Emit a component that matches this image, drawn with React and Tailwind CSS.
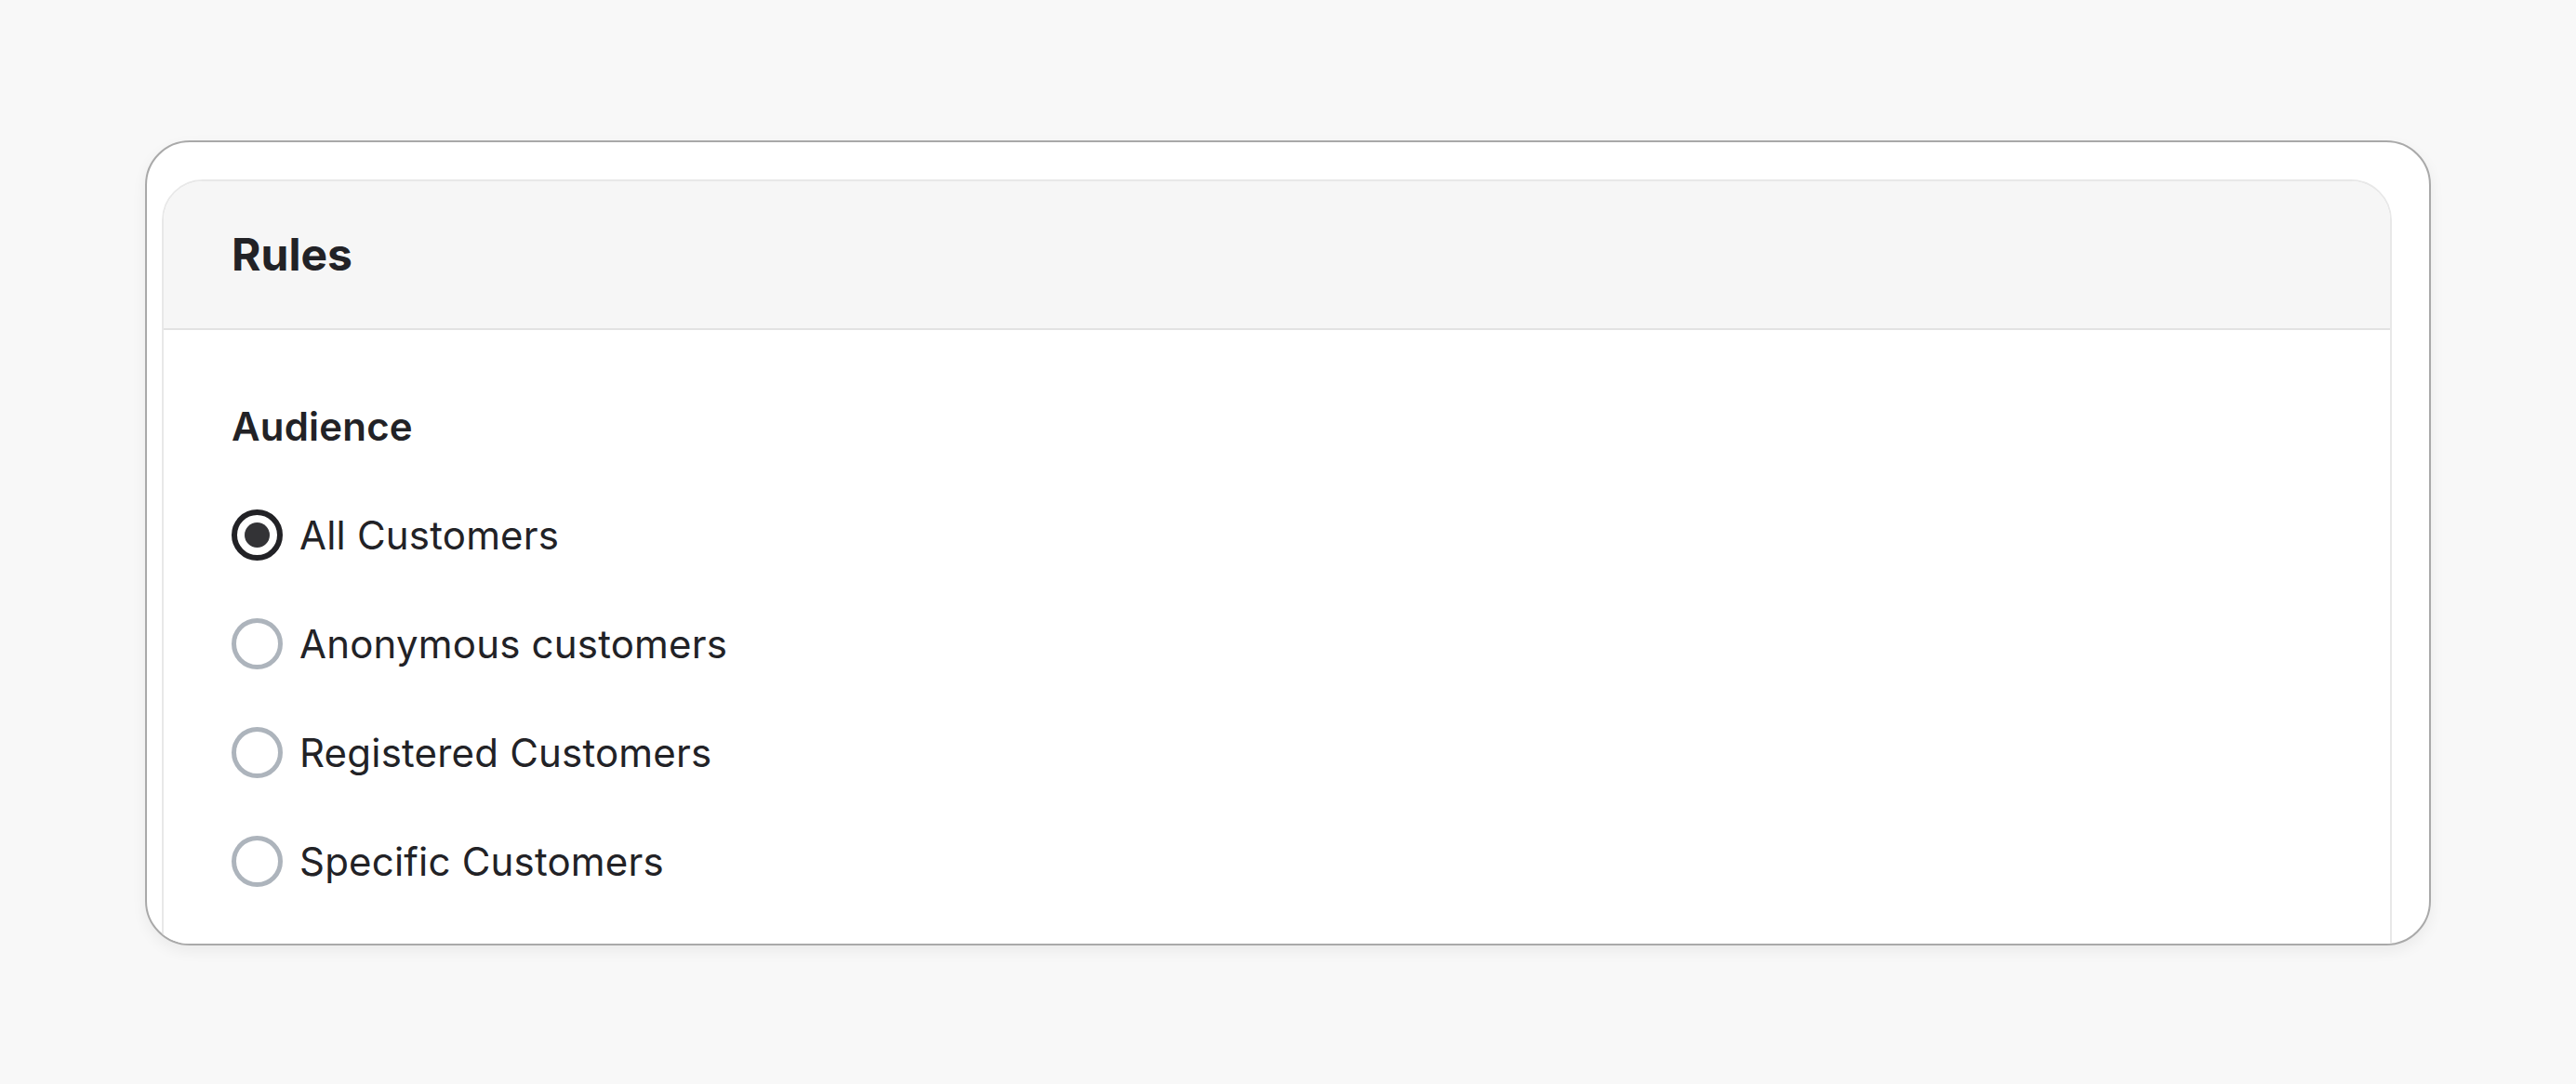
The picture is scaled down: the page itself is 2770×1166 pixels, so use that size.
import React, { useState } from 'react';

const options = [
  { id: 'all', label: 'All Customers' },
  { id: 'anonymous', label: 'Anonymous customers' },
  { id: 'registered', label: 'Registered Customers' },
  { id: 'specific', label: 'Specific Customers' },
];

const Radio = ({ checked }) => {
  if (checked) {
    return (
      <span className="flex h-[55px] w-[55px] shrink-0 items-center justify-center rounded-full border-[6px] border-[#222226]">
        <span className="h-[27px] w-[27px] rounded-full bg-[#333336]"></span>
      </span>
    );
  }
  return <span className="h-[55px] w-[55px] shrink-0 rounded-full border-[5px] border-[#adb4bc]"></span>;
};

const App = () => {
  const [audience, setAudience] = useState('all');

  return (
    <div
      className="min-h-screen bg-[#f8f8f8] pl-[156px] pt-[151px] text-[#222226]"
      style={{ fontFamily: 'Inter, "Noto Sans", sans-serif' }}
    >
      <div className="h-[866px] w-[2458px] overflow-hidden rounded-[48px] border-2 border-[#a9a9a9] bg-white pl-[16px] pr-[40px] pt-[40px] shadow-[0_6px_16px_rgba(0,0,0,0.06)]">
        <div className="h-[900px] overflow-hidden rounded-t-[44px] border-2 border-[#e8e8e8] bg-white">
          {/* Header */}
          <div className="flex h-[160px] items-center border-b-2 border-[#e2e2e2] bg-[#f6f6f6] px-[73px]">
            <h2 className="text-[48px] font-bold leading-[58px]">Rules</h2>
          </div>

          {/* Body */}
          <div className="px-[73px] pt-[79px]">
            <h3 className="text-[42px] font-semibold leading-[50px] tracking-[0.2px]">Audience</h3>
            <div className="mt-[64px] flex flex-col gap-[62px]">
              {options.map((opt) => (
                <label
                  key={opt.id}
                  className="flex cursor-pointer items-center gap-[18px]"
                  onClick={() => setAudience(opt.id)}
                >
                  <Radio checked={audience === opt.id} />
                  <span className="text-[42px] leading-[50px] tracking-[0.2px]">{opt.label}</span>
                </label>
              ))}
            </div>
          </div>
        </div>
      </div>
    </div>
  );
};

export default App;
